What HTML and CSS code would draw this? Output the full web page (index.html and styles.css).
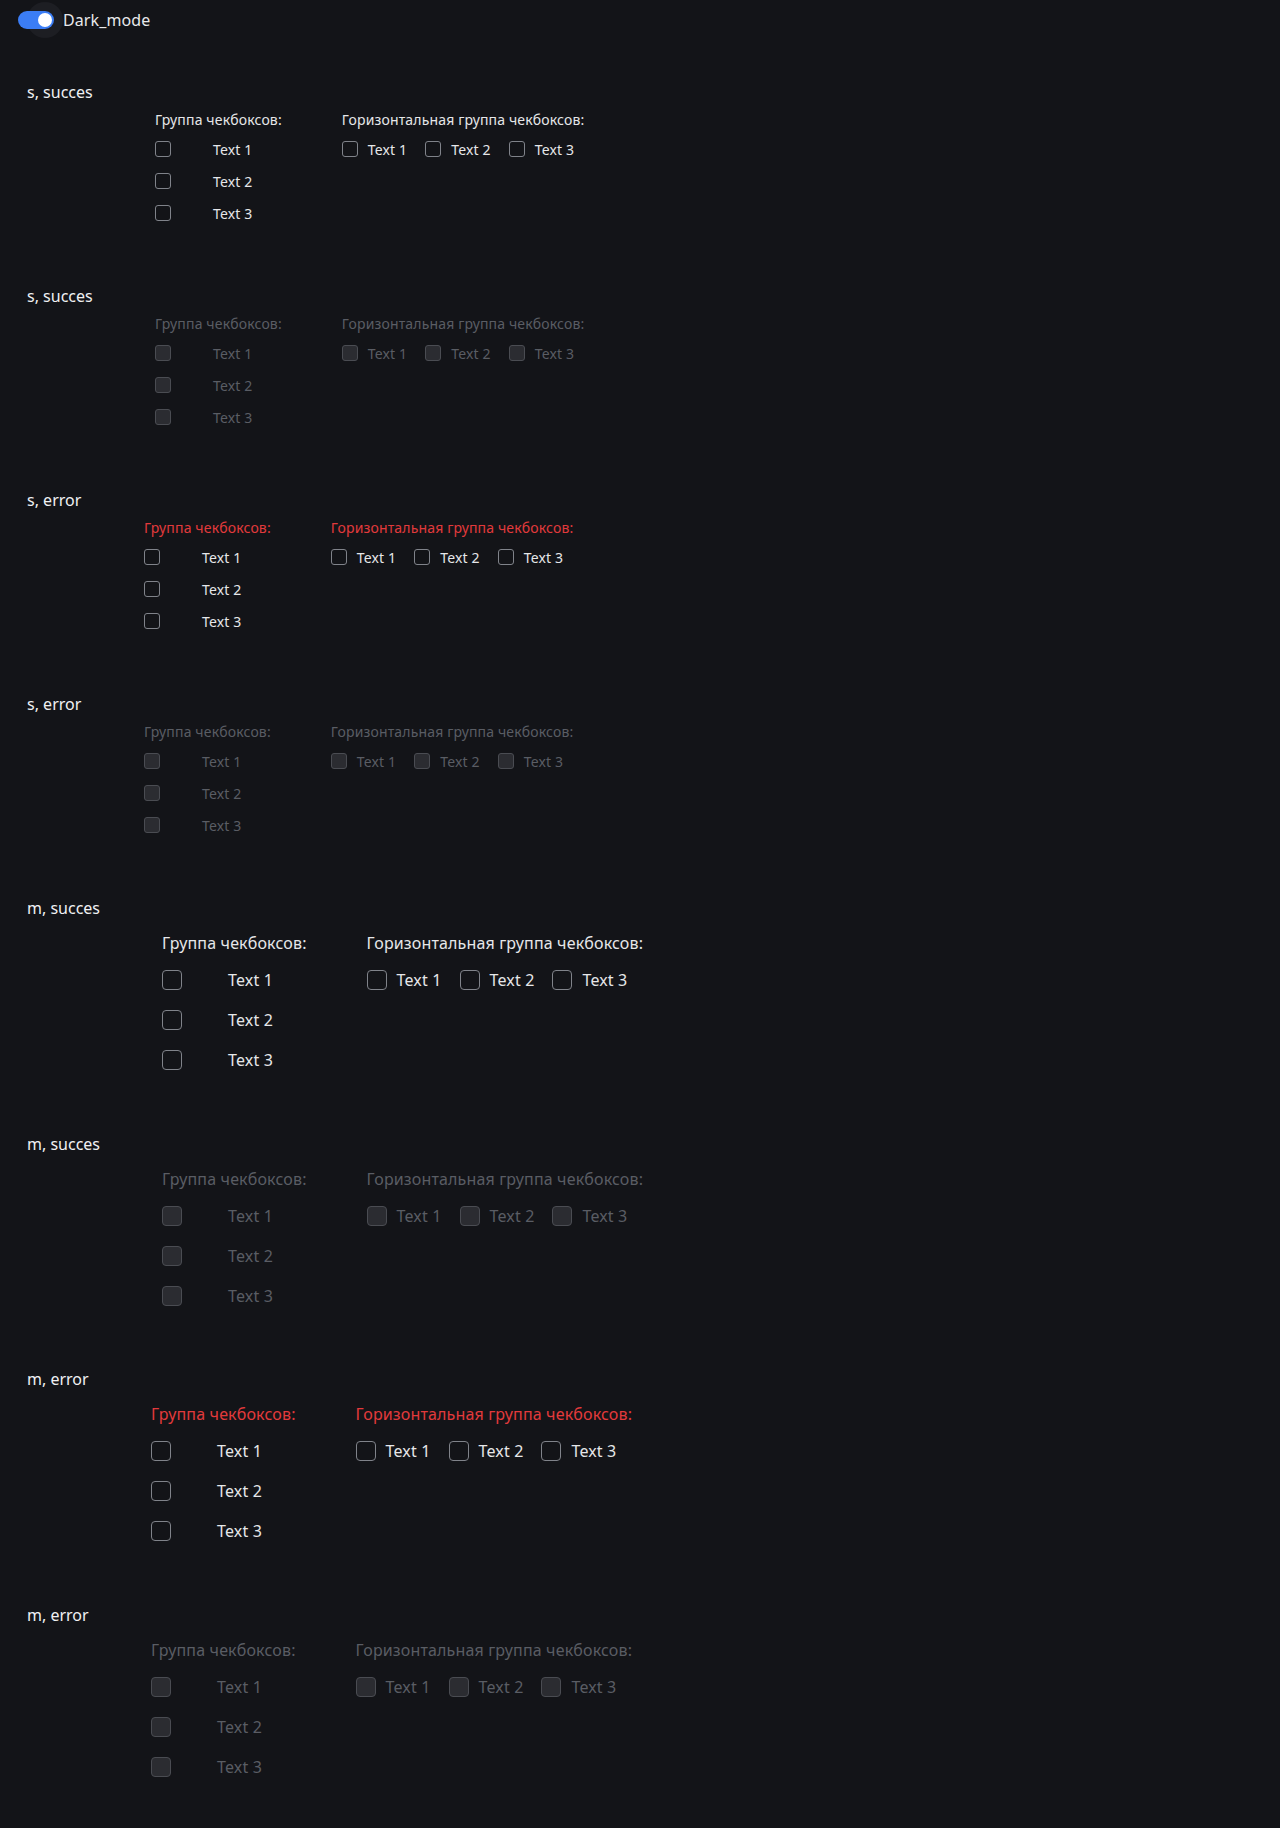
FILE: index.html
```html
<!DOCTYPE html>
<html lang="ru">
<head>
<meta charset="utf-8">
<title>Checkbox groups</title>
<link rel="stylesheet" href="styles.css">
</head>
<body>
<header class="topbar">
  <span class="switch"><span class="switch-halo"></span><span class="switch-track"><span class="switch-knob"></span></span></span>
  <span class="switch-label">Dark_mode</span>
</header>

<main class="sections">

  <section class="section size-s">
    <div class="section-title">s, succes</div>
    <div class="groups">
      <div class="group">
        <div class="group-label">Группа чекбоксов:</div>
        <div class="vlist">
          <label class="item"><span class="box"></span><span class="txt">Text 1</span></label>
          <label class="item"><span class="box"></span><span class="txt">Text 2</span></label>
          <label class="item"><span class="box"></span><span class="txt">Text 3</span></label>
        </div>
      </div>
      <div class="group">
        <div class="group-label">Горизонтальная группа чекбоксов:</div>
        <div class="hlist">
          <label class="item"><span class="box"></span><span class="txt">Text 1</span></label>
          <label class="item"><span class="box"></span><span class="txt">Text 2</span></label>
          <label class="item"><span class="box"></span><span class="txt">Text 3</span></label>
        </div>
      </div>
    </div>
  </section>

  <section class="section size-s is-disabled">
    <div class="section-title">s, succes</div>
    <div class="groups">
      <div class="group">
        <div class="group-label">Группа чекбоксов:</div>
        <div class="vlist">
          <label class="item"><span class="box"></span><span class="txt">Text 1</span></label>
          <label class="item"><span class="box"></span><span class="txt">Text 2</span></label>
          <label class="item"><span class="box"></span><span class="txt">Text 3</span></label>
        </div>
      </div>
      <div class="group">
        <div class="group-label">Горизонтальная группа чекбоксов:</div>
        <div class="hlist">
          <label class="item"><span class="box"></span><span class="txt">Text 1</span></label>
          <label class="item"><span class="box"></span><span class="txt">Text 2</span></label>
          <label class="item"><span class="box"></span><span class="txt">Text 3</span></label>
        </div>
      </div>
    </div>
  </section>

  <section class="section size-s is-error">
    <div class="section-title">s, error</div>
    <div class="groups">
      <div class="group">
        <div class="group-label">Группа чекбоксов:</div>
        <div class="vlist">
          <label class="item"><span class="box"></span><span class="txt">Text 1</span></label>
          <label class="item"><span class="box"></span><span class="txt">Text 2</span></label>
          <label class="item"><span class="box"></span><span class="txt">Text 3</span></label>
        </div>
      </div>
      <div class="group">
        <div class="group-label">Горизонтальная группа чекбоксов:</div>
        <div class="hlist">
          <label class="item"><span class="box"></span><span class="txt">Text 1</span></label>
          <label class="item"><span class="box"></span><span class="txt">Text 2</span></label>
          <label class="item"><span class="box"></span><span class="txt">Text 3</span></label>
        </div>
      </div>
    </div>
  </section>

  <section class="section size-s is-error is-disabled">
    <div class="section-title">s, error</div>
    <div class="groups">
      <div class="group">
        <div class="group-label">Группа чекбоксов:</div>
        <div class="vlist">
          <label class="item"><span class="box"></span><span class="txt">Text 1</span></label>
          <label class="item"><span class="box"></span><span class="txt">Text 2</span></label>
          <label class="item"><span class="box"></span><span class="txt">Text 3</span></label>
        </div>
      </div>
      <div class="group">
        <div class="group-label">Горизонтальная группа чекбоксов:</div>
        <div class="hlist">
          <label class="item"><span class="box"></span><span class="txt">Text 1</span></label>
          <label class="item"><span class="box"></span><span class="txt">Text 2</span></label>
          <label class="item"><span class="box"></span><span class="txt">Text 3</span></label>
        </div>
      </div>
    </div>
  </section>

  <section class="section size-m">
    <div class="section-title">m, succes</div>
    <div class="groups">
      <div class="group">
        <div class="group-label">Группа чекбоксов:</div>
        <div class="vlist">
          <label class="item"><span class="box"></span><span class="txt">Text 1</span></label>
          <label class="item"><span class="box"></span><span class="txt">Text 2</span></label>
          <label class="item"><span class="box"></span><span class="txt">Text 3</span></label>
        </div>
      </div>
      <div class="group">
        <div class="group-label">Горизонтальная группа чекбоксов:</div>
        <div class="hlist">
          <label class="item"><span class="box"></span><span class="txt">Text 1</span></label>
          <label class="item"><span class="box"></span><span class="txt">Text 2</span></label>
          <label class="item"><span class="box"></span><span class="txt">Text 3</span></label>
        </div>
      </div>
    </div>
  </section>

  <section class="section size-m is-disabled">
    <div class="section-title">m, succes</div>
    <div class="groups">
      <div class="group">
        <div class="group-label">Группа чекбоксов:</div>
        <div class="vlist">
          <label class="item"><span class="box"></span><span class="txt">Text 1</span></label>
          <label class="item"><span class="box"></span><span class="txt">Text 2</span></label>
          <label class="item"><span class="box"></span><span class="txt">Text 3</span></label>
        </div>
      </div>
      <div class="group">
        <div class="group-label">Горизонтальная группа чекбоксов:</div>
        <div class="hlist">
          <label class="item"><span class="box"></span><span class="txt">Text 1</span></label>
          <label class="item"><span class="box"></span><span class="txt">Text 2</span></label>
          <label class="item"><span class="box"></span><span class="txt">Text 3</span></label>
        </div>
      </div>
    </div>
  </section>

  <section class="section size-m is-error">
    <div class="section-title">m, error</div>
    <div class="groups">
      <div class="group">
        <div class="group-label">Группа чекбоксов:</div>
        <div class="vlist">
          <label class="item"><span class="box"></span><span class="txt">Text 1</span></label>
          <label class="item"><span class="box"></span><span class="txt">Text 2</span></label>
          <label class="item"><span class="box"></span><span class="txt">Text 3</span></label>
        </div>
      </div>
      <div class="group">
        <div class="group-label">Горизонтальная группа чекбоксов:</div>
        <div class="hlist">
          <label class="item"><span class="box"></span><span class="txt">Text 1</span></label>
          <label class="item"><span class="box"></span><span class="txt">Text 2</span></label>
          <label class="item"><span class="box"></span><span class="txt">Text 3</span></label>
        </div>
      </div>
    </div>
  </section>

  <section class="section size-m is-error is-disabled">
    <div class="section-title">m, error</div>
    <div class="groups">
      <div class="group">
        <div class="group-label">Группа чекбоксов:</div>
        <div class="vlist">
          <label class="item"><span class="box"></span><span class="txt">Text 1</span></label>
          <label class="item"><span class="box"></span><span class="txt">Text 2</span></label>
          <label class="item"><span class="box"></span><span class="txt">Text 3</span></label>
        </div>
      </div>
      <div class="group">
        <div class="group-label">Горизонтальная группа чекбоксов:</div>
        <div class="hlist">
          <label class="item"><span class="box"></span><span class="txt">Text 1</span></label>
          <label class="item"><span class="box"></span><span class="txt">Text 2</span></label>
          <label class="item"><span class="box"></span><span class="txt">Text 3</span></label>
        </div>
      </div>
    </div>
  </section>

</main>
</body>
</html>
```
FILE: styles.css
```css
html, body {
  margin: 0;
  padding: 0;
}

body {
  background: #131418;
  color: #e6e7e9;
  font-family: "Noto Sans", "Open Sans", sans-serif;
  min-height: 1828px;
}

/* ---------- top bar ---------- */
.topbar {
  display: flex;
  align-items: center;
  padding: 11px 0 0 18px;
  height: 18px;
}

.switch {
  position: relative;
  width: 36px;
  height: 18px;
  flex: none;
}

.switch-halo {
  position: absolute;
  left: 9px;
  top: -9px;
  width: 36px;
  height: 36px;
  border-radius: 50%;
  background: #1d1e23;
}

.switch-track {
  position: absolute;
  inset: 0;
  border-radius: 9px;
  background: #3b7df5;
}

.switch-knob {
  position: absolute;
  right: 2px;
  top: 2px;
  width: 14px;
  height: 14px;
  border-radius: 50%;
  background: #ffffff;
}

.switch-label {
  margin-left: 9px;
  font-size: 16px;
  line-height: 18px;
  color: #e8e9eb;
  letter-spacing: 0.1px;
}

/* ---------- sections ---------- */
.sections {
  padding: 51px 0 0 27px;
}

.section-title {
  font-size: 16px;
  line-height: 24px;
  height: 24px;
  color: #f0f1f3;
}

.groups {
  display: flex;
  align-items: flex-start;
  gap: 60px;
  letter-spacing: 0.15px;
}

.group {
  display: flex;
  flex-direction: column;
}

.vlist,
.hlist {
  display: flex;
}

.vlist {
  flex-direction: column;
}

.item {
  display: flex;
  align-items: center;
  color: #e6e7e9;
}

.hlist .item .txt {
  margin-left: 10px;
}

.box {
  box-sizing: border-box;
  flex: none;
  border: 1px solid #80838a;
  background: transparent;
}

/* size s */
.size-s {
  margin-bottom: 55px;
}

.size-s .groups {
  margin: 6px 0 0 128px;
}

.size-s .group-label {
  font-size: 14px;
  line-height: 20px;
}

.size-s .vlist,
.size-s .hlist {
  margin-top: 3px;
}

.size-s .item {
  height: 32px;
  font-size: 14px;
}

.size-s .box {
  width: 16px;
  height: 16px;
  border-radius: 3px;
}

.size-s .vlist .txt {
  margin-left: 42px;
}

.size-s .hlist {
  gap: 18px;
}

/* size m */
.size-m {
  margin-bottom: 51.5px;
}

.size-m .groups {
  margin: 11px 0 0 135px;
}

.size-m .group-label {
  font-size: 16px;
  line-height: 24px;
}

.size-m .vlist,
.size-m .hlist {
  margin-top: 5px;
}

.size-m .item {
  height: 40px;
  font-size: 16px;
}

.size-m .box {
  width: 20px;
  height: 20px;
  border-radius: 4px;
}

.size-m .vlist .txt {
  margin-left: 46px;
}

.size-m .hlist {
  gap: 18px;
}

/* error */
.is-error .group-label {
  color: #e23a3c;
}

.size-s.is-error .groups {
  margin-left: 117px;
}

.size-m.is-error .groups {
  margin-left: 124px;
}

/* disabled */
.is-disabled .group-label,
.is-disabled.is-error .group-label,
.is-disabled .item {
  color: #5a5d64;
}

.is-disabled .box {
  background: #2b2c31;
  border-color: #4a4c52;
}
```
